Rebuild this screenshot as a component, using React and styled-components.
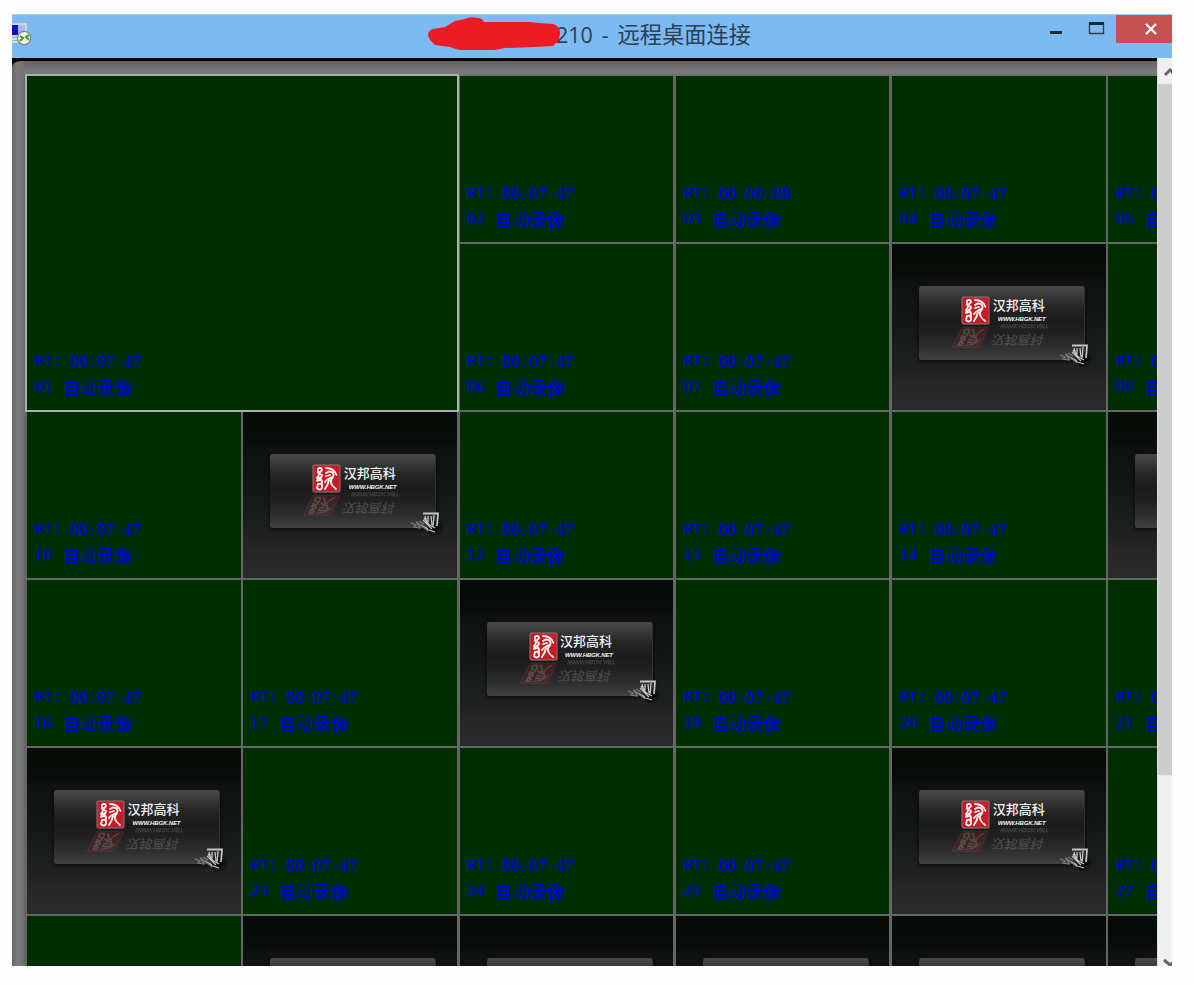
import React from "react";
import styled, { createGlobalStyle, css } from "styled-components";

const GlobalStyle = createGlobalStyle`
  * { box-sizing: border-box; }
  body { margin: 0; background: #fff; overflow: hidden; }
`;

const Page = styled.main`
  width: 1194px;
  height: 986px;
  padding: 14px 22px 20px 12px;
  background: #fefefe;
`;

const Window = styled.section`
  width: 1160px;
  height: 952px;
  display: flex;
  flex-direction: column;
  overflow: hidden;
  background: #7dbaf2;
`;

const TitleBar = styled.header`
  height: 44px;
  flex: none;
  display: grid;
  grid-template-columns: 413px 1fr auto;
  align-items: start;
  border-top: 1px solid #a5cdf3;
`;

const AppIcon = styled.svg`
  display: block;
  width: 22px;
  height: 26px;
  margin-top: 7px;
`;

const Title = styled.h1`
  margin: 0;
  height: 40px;
  display: flex;
  align-items: center;
  font: 400 22px/40px "Open Sans", "Noto Sans CJK SC", sans-serif;
  color: #2b4050;
  white-space: pre;
`;

const Scribble = styled.svg`
  flex: none;
  width: 136px;
  height: 36px;
  margin-right: -5px;
  position: relative;
  z-index: 1;
`;

const TitleText = styled.span`
  font-size: 21.5px;
  word-spacing: 3.2px;
  span { font-size: 22.3px; }
`;

const Controls = styled.nav`
  display: flex;
  height: 28px;
`;

const ControlButton = styled.button`
  width: ${(p) => p.$width}px;
  height: 28px;
  padding: 0;
  border: 0;
  background: ${(p) => (p.$close ? "#c75050" : "transparent")};
  svg { display: block; }
`;

const Body = styled.div`
  flex: 1;
  min-height: 0;
  display: flex;
  background: linear-gradient(#000, #000) top left / 20px 12px no-repeat;
`;

const Desktop = styled.div`
  width: 1145px;
  flex: none;
  overflow: hidden;
  padding: 15px 0 0 12px;
  border-top: 3px solid #000;
  border-top-left-radius: 9px;
  background:
    linear-gradient(90deg, #646464 0, #7a7a7a 5px, #747474 10px, transparent 14px),
    linear-gradient(180deg, #626262 0, #7c7c7c 11px, #707070 15px, #696969 18px);
`;

const Wall = styled.div`
  width: max-content;
  display: grid;
  grid-template-columns: repeat(6, 213.5px);
  grid-auto-rows: 165.5px;
  gap: 2.6px 2.8px;
  padding: 0 3px;
  background: #666;
`;

const Tile = styled.article`
  overflow: hidden;
  display: flex;
  flex-direction: column;
  ${(p) =>
    p.$offline
      ? css`
          padding: 42px 0 0 27px;
          background: linear-gradient(#070b08 0, #080c09 15%, #101111 24%, #141716 48%, #202220 75%, #282828 88%, #2b2b2b 100%);
        `
      : css`
          justify-content: flex-end;
          padding: 0 0 11px 7.5px;
          background: #002e00;
        `}
  ${(p) =>
    p.$selected &&
    css`
      grid-column: span 2;
      grid-row: span 2;
      overflow: visible;
      outline: 2px solid #acb0ac;
    `}
`;

const Overlay = styled.p`
  margin: 0;
  height: 25px;
  display: flex;
  align-items: center;
  line-height: 25px;
  white-space: pre;
  color: #0000ec;
  font-family: "Liberation Serif", serif;
  font-size: 17px;
  -webkit-text-stroke: 0.25px #0000ec;
`;

const Label = styled.span`
  width: 35.5px;
  flex: none;
  font-family: "Liberation Mono", monospace;
  font-size: 15px;
`;

const ChannelNumber = styled.span`
  width: 28.5px;
  flex: none;
  letter-spacing: 0.45px;
`;

const Colon = styled.span`
  display: inline-block;
  width: 9px;
  padding-left: 2px;
  opacity: 0.7;
`;

const Digits = styled.span`
  letter-spacing: 0.45px;
`;

const Mode = styled.span`
  font-family: "Noto Sans CJK SC", sans-serif;
  font-size: 17.3px;
  line-height: 25px;
  -webkit-text-stroke: 0;
`;

const Brand = styled.div`
  width: 166px;
  height: 74px;
  flex: none;
  border-radius: 3px;
  padding: 10px 0 0 42px;
  display: grid;
  grid-template-columns: 29px 90px;
  grid-template-rows: 29px 30px;
  column-gap: 2.5px;
  background: linear-gradient(#4a4a4a 0, #393939 13%, #242524 28%, #1a1b1a 48%, #202120 65%, #303130 86%, #414241 100%);
  box-shadow: 0 1px 4px #070807, inset -1px 0 0 #303230;
  position: relative;
`;

const Seal = styled.svg`
  display: block;
  width: 29px;
  height: 29px;
  ${(p) =>
    p.$mirror &&
    css`
      transform: translate(-5px, -2px) scaleY(-0.75) skewX(20deg);
      transform-origin: center;
      opacity: 0.2;
    `}
`;

const BrandName = styled.div`
  color: #f4f4f4;
  white-space: nowrap;
  font: 500 13px/17px "Noto Sans CJK SC", sans-serif;
  small {
    display: block;
    margin-left: 5px;
    font: italic 700 6px/12px "Liberation Sans", sans-serif;
    letter-spacing: -0.15px;
  }
`;

const Reflection = styled(BrandName)`
  height: 29px;
  transform: translateY(-5px) scaleY(-1) skewX(15deg);
  opacity: 0.16;
`;

const Ornament = styled.svg`
  position: absolute;
  left: 136px;
  top: 55px;
  width: 38px;
  height: 28px;
`;

const Scrollbar = styled.aside`
  width: 15px;
  display: flex;
  flex-direction: column;
  background: #efefef;
  border-left: 1px solid #ddd;
  overflow: hidden;
`;

const Arrow = styled.svg`
  flex: none;
  display: block;
  width: 14px;
  height: ${(p) => p.$height}px;
`;

const Thumb = styled.div`
  height: 691px;
  flex: none;
  background: #cdcdcd;
`;

const Track = styled.div`
  flex: 1;
`;

function SealMark({ mirror }) {
  return (
    <Seal $mirror={mirror} viewBox="0 0 29 29">
      <rect x="1" y="1" width="27" height="27" rx="1" fill="#c91b25" stroke="#8d777a" strokeWidth="1" />
      <g fill="none" stroke="#fff4f2" strokeWidth="1.8" strokeLinecap="round" strokeLinejoin="round">
        <path d="M6 4.5Q10 3 10 6Q9 8 6 9M6 5V9L10 11Q10 14 6 14L5 17Q9 15 10 17Q11 20 6 20L5 24Q8 27 10 24V20M7 11L5 14M8 14L10 17" />
        <path d="M14 4Q22 4 24.5 11M14 9Q18 6 21 9Q23 13 18 14Q14 16 13 18M14 12L18 11M21 13Q18 16 19 19Q20 22 24 25M17 16Q16 21 13 25" />
      </g>
    </Seal>
  );
}

function BrandPanel() {
  return (
    <Brand>
      <SealMark />
      <BrandName>汉邦高科<small>WWW.HBGK.NET</small></BrandName>
      <SealMark mirror />
      <Reflection aria-hidden="true">汉邦高科<small>WWW.HBGK.NET</small></Reflection>
      <Ornament viewBox="0 0 38 28">
        <defs>
          <radialGradient id="shade">
            <stop stopColor="#020302" />
            <stop offset="1" stopColor="#020302" stopOpacity="0" />
          </radialGradient>
        </defs>
        <ellipse cx="28" cy="18" rx="11" ry="10" fill="url(#shade)" />
        <g fill="none" stroke="#c4c4c4" strokeWidth="1.3">
          <path d="M17 4.5H32L31 17" strokeWidth="1.8" />
          <path d="M19 7L21 14M22 7V13M25 7L26 16M28 6L27 18M18 9L24 17M17 11L26 20M20 14L29 19M20 20L29 23M15 16L22 20" />
          <path d="M5 14L10 16L8 18L14 19L12 14L17 18M13 12L18 15M10 13L14 17M17 18L22 22" stroke="#777" />
        </g>
      </Ornament>
    </Brand>
  );
}

const layout = [
  1, 2, 3, 4, 5,
  6, 7, null, 9,
  10, null, 12, 13, 14, null,
  16, 17, null, 19, 20, 21,
  null, 23, 24, 25, null, 27,
  28, null, null, null, null, null,
];

function Channel({ number }) {
  if (number === null) {
    return <Tile $offline><BrandPanel /></Tile>;
  }
  const time = number === 3 ? ["00", "00", "09"] : ["00", "07", "47"];
  return (
    <Tile $selected={number === 1}>
      <Overlay>
        <Label>RT:</Label>
        <Digits>{time[0]}<Colon>:</Colon>{time[1]}<Colon>:</Colon>{time[2]}</Digits>
      </Overlay>
      <Overlay>
        <ChannelNumber>{String(number).padStart(2, "0")}</ChannelNumber>
        <Mode>自动录像</Mode>
      </Overlay>
    </Tile>
  );
}

export default function App() {
  return (
    <Page>
      <GlobalStyle />
      <Window>
        <TitleBar>
          <AppIcon viewBox="0 0 22 26">
            <path d="M0 1H15V15H0Z" fill="#d4d4d2" />
            <path d="M0 3H6V13H0Z" fill="#0713c5" />
            <path d="M6 3H13V13H6Z" fill="#a9b7ff" />
            <path d="M0 16H6V18H0M0 19H6V21H0" fill="#d5dbdf" />
            <circle cx="12.2" cy="16" r="6.7" fill="#f2f3ed" stroke="#7b8079" strokeWidth="1.2" />
            <path d="M8 14L11 16L8 19M17 13L14 15L17 18" fill="none" stroke="#2da32c" strokeWidth="2" />
          </AppIcon>
          <Title>
            <Scribble viewBox="0 0 136 36">
              <path d="M8 12L20 10L30 4L40 2Q45 -1 53 1Q57 1 59 5L105 5L114 6L128 7Q135 9 135 16L134 23L128 29L110 30L80 31L70 33L34 33L25 30L10 28L5 23Q0 15 8 12Z" fill="#ed1c24" />
            </Scribble>
            <TitleText>210 - <span>远程桌面连接</span></TitleText>
          </Title>
          <Controls>
            <ControlButton $width={40} aria-label="Minimize">
              <svg width="40" height="28"><path d="M6 17.5H18" stroke="#202a33" strokeWidth="3" /></svg>
            </ControlButton>
            <ControlButton $width={32} aria-label="Maximize">
              <svg width="32" height="28"><path d="M5.5 8V18.5H19.5V8" fill="none" stroke="#34414c" strokeWidth="1.4" /><path d="M5 8.5H20" stroke="#1d252c" strokeWidth="3" /></svg>
            </ControlButton>
            <ControlButton $width={56} $close aria-label="Close">
              <svg width="56" height="28"><path d="M30 9L40 19M40 9L30 19" stroke="#fff" strokeWidth="2.3" /></svg>
            </ControlButton>
          </Controls>
        </TitleBar>
        <Body>
          <Desktop>
            <Wall>
              {layout.map((number, index) => <Channel key={index} number={number} />)}
            </Wall>
          </Desktop>
          <Scrollbar>
            <Arrow $height={26} viewBox="0 0 14 26"><path d="M7 17L12 12L17 17" fill="none" stroke="#666" strokeWidth="3" /></Arrow>
            <Thumb />
            <Track />
            <Arrow $height={14} viewBox="0 0 14 14"><path d="M6 8L12 13L18 8" fill="none" stroke="#666" strokeWidth="3" /></Arrow>
          </Scrollbar>
        </Body>
      </Window>
    </Page>
  );
}
